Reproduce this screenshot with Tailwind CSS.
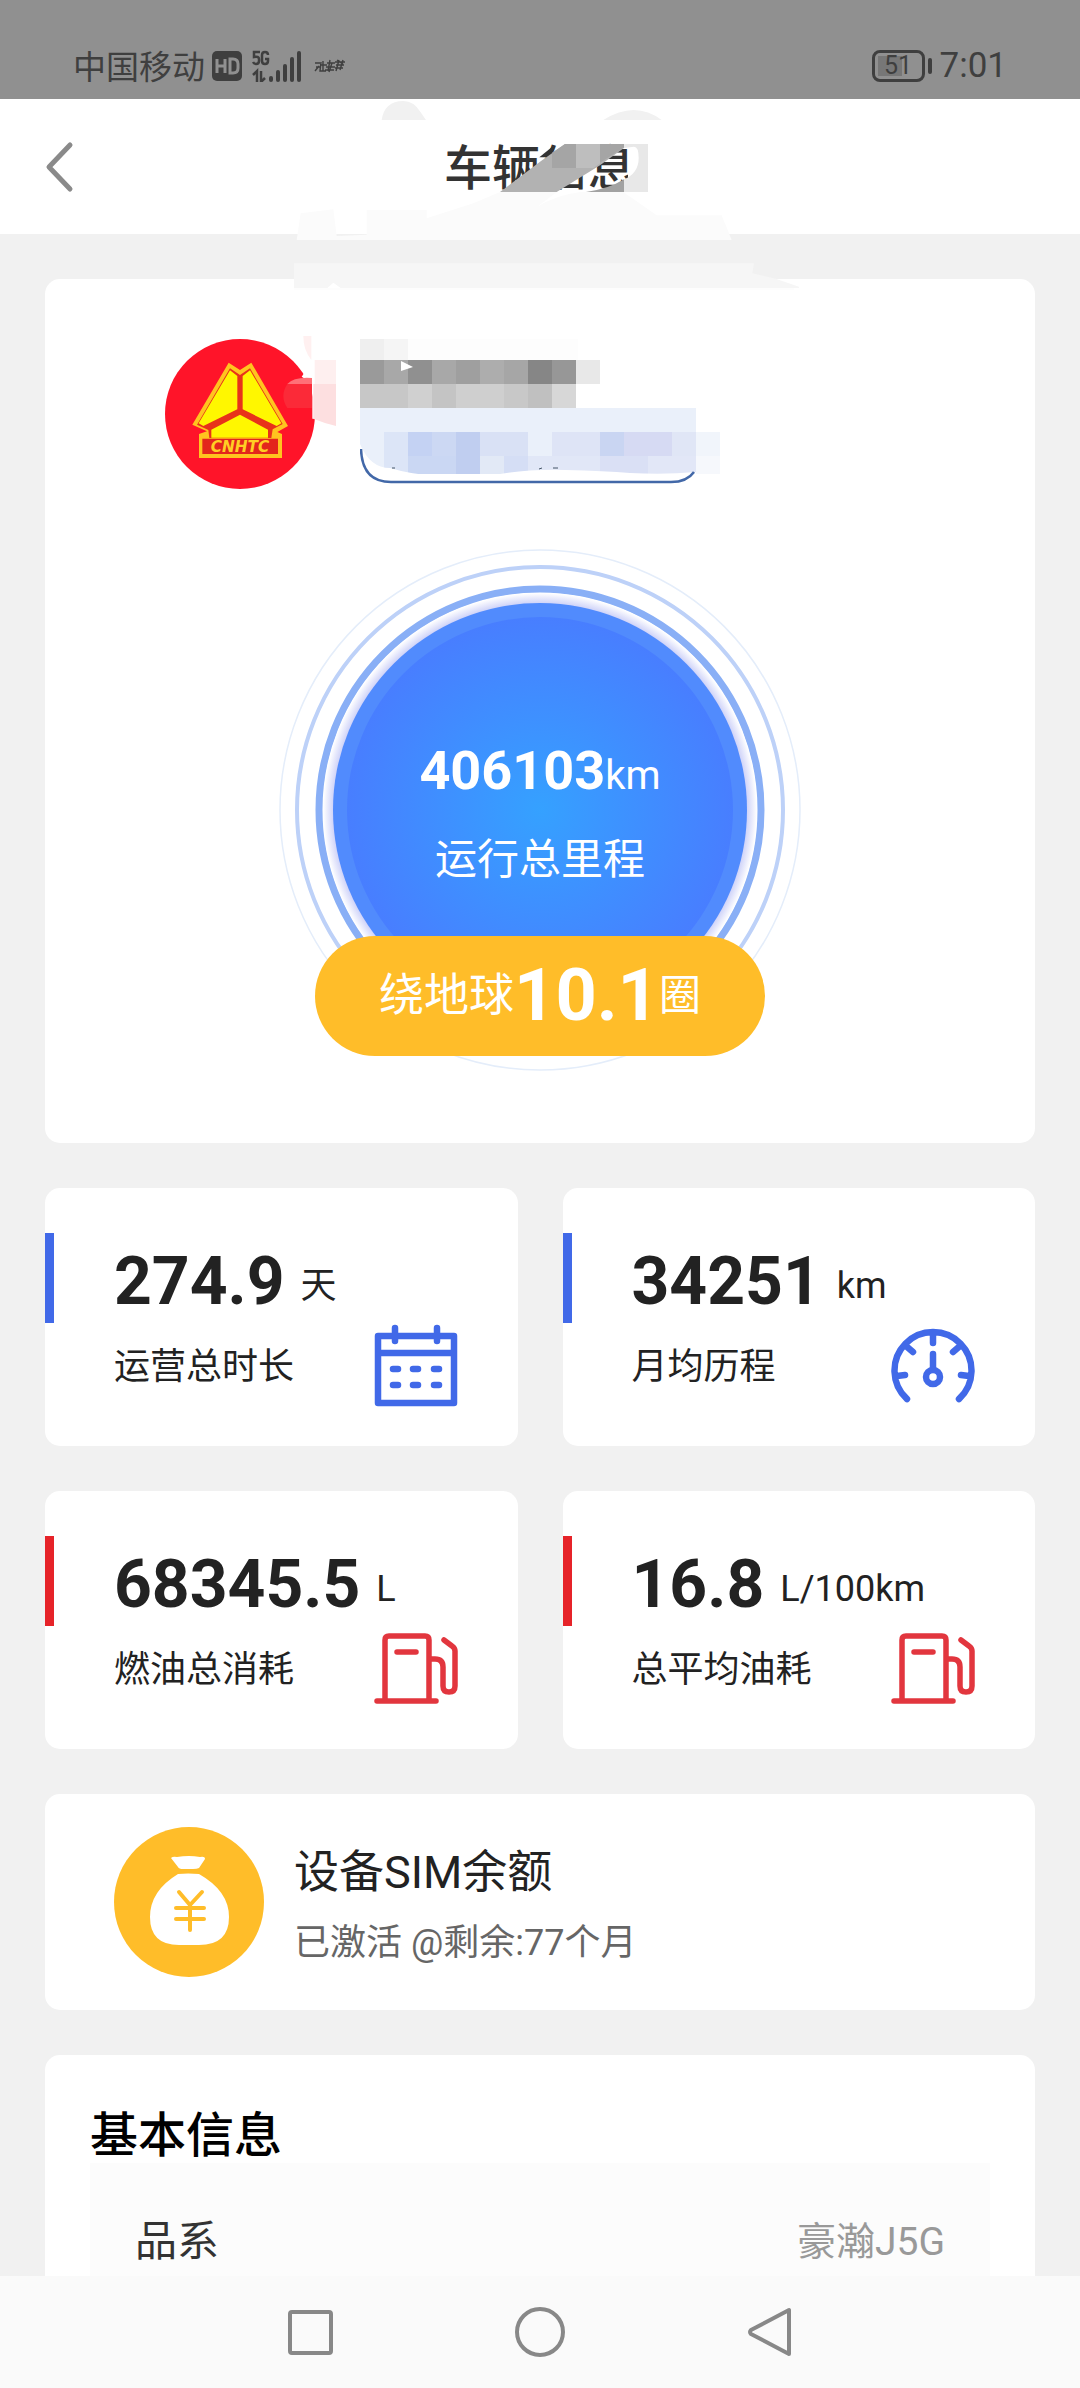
<!DOCTYPE html>
<html lang="zh-CN">
<head>
<meta charset="utf-8">
<meta name="viewport" content="width=device-width, initial-scale=1">
<title>车辆信息</title>
<script src="https://cdn.jsdelivr.net/npm/@tailwindcss/browser@4"></script>
</head>
<body class="flex h-screen flex-col overflow-hidden bg-[#f1f1f1] font-['Roboto','Noto_Sans_CJK_SC',sans-serif] text-[#222]">

<!-- System status bar -->
<div class="flex h-[99px] shrink-0 items-end justify-between bg-[#909090] px-[73px] pb-[15px] text-[#3f3f3f]">
  <div class="flex h-9 items-center">
    <span class="pt-1 text-[33px] leading-9">中国移动</span>
    <svg class="ml-[7px] h-[30px] w-[30px]" viewBox="0 0 30 30" aria-label="HD"><rect width="30" height="30" rx="5" fill="#3f3f3f"/><path d="M5 8v14M13 8v14M5 15h8M18 8v14h3q5 0 5-5v-4q0-5-5-5z" fill="none" stroke="#909090" stroke-width="3"/></svg>
    <svg class="ml-[10px] h-8 w-[52px]" viewBox="0 0 52 32" aria-label="5G" fill="#3f3f3f">
      <path d="M8 2H2v5q5-1 5 2v2q0 3-3 3-2 0-3-2M16 5q0-3-3-3t-3 3v6q0 3 3 3t3-3V9h-3" fill="none" stroke="#3f3f3f" stroke-width="2.500"/>
      <path d="M1 25l4-4v11M9 21v11l4-4" fill="none" stroke="#3f3f3f" stroke-width="2.500"/>
      <rect x="17" y="26" width="4" height="6" rx="2"/><rect x="24" y="20" width="4" height="12" rx="2"/><rect x="31" y="14" width="4" height="18" rx="2"/><rect x="38" y="7" width="4" height="25" rx="2"/><rect x="45" y="1" width="4" height="31" rx="2"/>
    </svg>
    <svg class="ml-[10px] h-4 w-8" viewBox="0 0 32 16" fill="none" stroke="#3f3f3f" stroke-width="1.4" aria-hidden="true"><path d="M1 5h5M2 9h5M1 13l4-5M7 4l-1 9h6M7 7h6M9 3v10M13 5h8M12 9h9M11 12h9M16 2l-2 11M18 5l-3 9M21 4h10M22 7h8M21 10h8M25 2l-3 11M29 2l-3 10M23 2l6 4"/></svg>
  </div>
  <div class="flex h-9 items-center">
    <span class="relative flex h-8 w-[53px] items-center rounded-lg border-[3px] border-[#3f3f3f] pl-[3px]">
      <span class="h-5 w-6 bg-[#777]"></span>
      <span class="absolute inset-0 text-center text-[25px] leading-[26px]">51</span>
    </span>
    <span class="ml-[3px] h-4 w-1 rounded bg-[#3f3f3f]"></span>
    <time class="ml-[8px] text-[35px] leading-9">7:01</time>
  </div>
</div>

<!-- Title bar -->
<header class="relative z-10 flex h-[135px] shrink-0 items-center justify-center bg-white">
  <button class="absolute left-[42px] flex h-[60px] w-10 items-center" aria-label="返回">
    <svg class="h-[52px] w-9" viewBox="0 0 36 52" fill="none" stroke="#8a8a8a" stroke-width="5" stroke-linecap="round" stroke-linejoin="round"><path d="M28 4L7 26l21 22"/></svg>
  </button>
  <h1 class="pt-1 text-[48px] font-medium leading-[68px] text-[#333]">车辆信息</h1>
  <!-- Privacy smudges over the title -->
  <svg class="pointer-events-none absolute -top-[9px] left-1/2 -ml-[260px] h-[200px] w-[520px]" viewBox="0 0 1560 600" aria-hidden="true">
    <path d="M305 90q8-56 65-57 32 0 52 34l16 23zM970 90q95-60 175 0z" fill="#f1f1f1"/>
    <path d="M50 450l12-80 98-12 10 80 90-4v-74h180v25l140-45 80-34h370l100 70h195l30 74z" fill="#fbfbfb"/>
    <path d="M815 172h8l-15 30h-30z" fill="#333"/>
    <path d="M660 306L780 215l75-53h180v10L960 226 830 306z" fill="#b2b2b2"/>
    <path d="M816 188l39-26h33v72h-72zM960 162h72v10l-72 46z" fill="#a5a5a5"/>
    <path d="M888 162h72v58l-20 14h-52z" fill="#bebebe"/>
    <path d="M918 306q70-10 114-38v38z" fill="#a2a2a2"/>
    <path d="M1044 172h20q14 6 12 34 0 44-32 64z" fill="#fff"/>
    <path d="M1032 162h72v144h-72v-38q44-18 44-64 0-34-14-34l-30 4z" fill="#e8e8e8"/>
    <path d="M770 352l60-46h72q-80 10-132 46z" fill="#fff"/>
    <path d="M42 520h1380l-5 30 70 16 70 24v4H182l-22-16-18 16H42z" fill="#f6f6f6"/>
    <path d="M42 594h1500v18H42z" fill="#fdfdfd"/>
  </svg>
</header>

<main class="flex min-h-0 flex-1 flex-col gap-[45px] overflow-hidden px-[45px] pt-[45px]">

  <!-- Vehicle summary -->
  <section class="shrink-0 rounded-[15px] bg-white pb-[72px] pt-[60px]">
    <div class="flex items-start gap-[45px] pl-[120px]">
      <svg class="h-[150px] w-[150px] shrink-0 overflow-visible" viewBox="45 57 450 450" role="img" aria-label="CNHTC">
        <circle cx="270" cy="282" r="225" fill="#ff1429"/>
        <path d="M236 128l34 22 34-22 110 190-32 18 14 6v72H147v-72l24-8-44-20z" fill="#ffc41f"/>
        <path d="M240 145l30 20 30-20 98 167-30 16-4 26H178l-3-24-34-16z" fill="#e8321a"/>
        <path d="M240 151l22 17v100l-102 50-14-8zM300 151l-22 17v100l102 50 14-8zM270 284l84 45v24H184v-24z" fill="#fff700"/>
        <path d="M157 356h227v46H157z" fill="#e3261c"/>
        <text x="270" y="395" text-anchor="middle" font-family="DejaVu Sans" font-weight="bold" font-style="italic" font-size="46" fill="#ffcf24">CNHTC</text>
        <path d="M486 125l-31 45 12 8 20-8v126h8l10 10h53V120z" fill="#fff"/>
        <path d="M494 120h64v72h-64z" fill="#feefef"/>
        <path d="M490 192h68v126q-34-8-68-22z" fill="#fddfe0"/>
        <path d="M412 192q20-22 74-18v18z" fill="#ff7077"/>
        <path d="M412 192h74v72h-74q-24-36 0-72z" fill="#fb2a38"/>
        <path d="M460 48h24v72q-24-30-24-72z" fill="#fff0f0"/>
      </svg>
      <!-- Redacted plate and tag -->
      <svg class="h-[150px] w-[360px]" viewBox="360 339 360 150" aria-hidden="true" shape-rendering="crispEdges">
        <path d="M360 339h24v21h-24z" fill="#efefef"/><path d="M384 339h24v21h-24z" fill="#f5f5f5"/>
        <path d="M408 339h170v21H408z" fill="#fdfdfd"/>
        <path d="M360 360h24v24h-24z" fill="#9a9a9a"/><path d="M384 360h24v24h-24z" fill="#a8a8a8"/><path d="M408 360h24v24h-24z" fill="#909090"/><path d="M432 360h24v24h-24z" fill="#a8a8a8"/><path d="M456 360h24v24h-24z" fill="#9f9f9f"/><path d="M480 360h24v24h-24z" fill="#adadad"/><path d="M504 360h24v24h-24z" fill="#a6a6a6"/><path d="M528 360h24v24h-24z" fill="#868686"/><path d="M552 360h24v24h-24z" fill="#979797"/><path d="M576 360h24v24h-24z" fill="#e8e8e8"/>
        <path d="M360 384h48v24h-48z" fill="#c7c7c7"/><path d="M408 384h24v24h-24z" fill="#d0d0d0"/><path d="M432 384h24v24h-24z" fill="#c4c4c4"/><path d="M456 384h48v24h-48z" fill="#cfcfcf"/><path d="M504 384h24v24h-24z" fill="#c8c8c8"/><path d="M528 384h24v24h-24z" fill="#c0c0c0"/><path d="M552 384h24v24h-24z" fill="#d7d7d7"/>
        <path d="M360 408h336v66H360z" fill="#eaf0fa"/>
        <path d="M384 432h24v42h-24z" fill="#dce5f7"/><path d="M408 432h24v24h-24z" fill="#c4d2f3"/><path d="M432 432h24v24h-24z" fill="#ccd8f3"/><path d="M456 432h24v42h-24z" fill="#c0cef0"/><path d="M480 432h48v24h-48z" fill="#d9e1f5"/><path d="M552 432h48v24h-48z" fill="#dee4f6"/><path d="M600 432h24v24h-24z" fill="#c9d5f2"/><path d="M624 432h48v24h-48z" fill="#d6daf3"/><path d="M672 432h24v24h-24z" fill="#e0e6f6"/><path d="M696 432h24v24h-24z" fill="#f1f5fb"/>
        <path d="M408 456h48v18h-48z" fill="#cad7f3"/><path d="M480 456h24v18h-24z" fill="#e2e9f6"/><path d="M504 456h24v18h-24z" fill="#d5def5"/><path d="M528 456h72v18h-72z" fill="#e1e7f7"/><path d="M600 456h48v18h-48z" fill="#dae0f5"/><path d="M648 456h48v18h-48z" fill="#e2e7f7"/><path d="M696 456h24v18h-24z" fill="#f6f8fc"/>
        <g shape-rendering="auto">
          <path d="M360 444q10 24 30 24 20 6 40 7 40 1 70-1 30-5 65-4 40 1 65 3 35 2 66-1v17H360z" fill="#fff"/>
          <path d="M361 449q1 33 30 33h280q16 0 23-10" fill="none" stroke="#4268a8" stroke-width="2.5"/>
          <path d="M401 361l12 6-12 4z" fill="#fff"/>
          <path d="M392 468h3M539 469l3-1M553 468h5" stroke="#456" stroke-width="1"/>
        </g>
      </svg>
    </div>

    <!-- Total mileage dial -->
    <div class="mt-[60px] grid justify-center">
      <svg class="col-start-1 row-start-1 h-[522px] w-[522px]" viewBox="0 0 522 522" aria-hidden="true">
        <defs>
          <radialGradient id="disc"><stop offset="0" stop-color="#35a1ff"/><stop offset="1" stop-color="#487eff"/></radialGradient>
          <radialGradient id="glow"><stop offset=".95" stop-color="#ccd0f8"/><stop offset="1" stop-color="#fff"/></radialGradient>
        </defs>
        <circle cx="261" cy="261" r="260" fill="none" stroke="#e4edfa" stroke-width="1.5"/>
        <circle cx="261" cy="261" r="243" fill="none" stroke="#bdd1f8" stroke-width="4"/>
        <circle cx="261" cy="261" r="221" fill="none" stroke="#89aff6" stroke-width="7"/>
        <circle cx="261" cy="261" r="217" fill="url(#glow)"/>
        <circle cx="261" cy="261" r="207" fill="#518bfd"/>
        <circle cx="261" cy="261" r="193" fill="url(#disc)"/>
      </svg>
      <div class="col-start-1 row-start-1 flex flex-col items-center pt-[190px] text-white">
        <p class="text-[40px] leading-[64px]"><strong class="text-[54px] font-bold">406103</strong>km</p>
        <p class="mt-[22px] text-[42px] leading-[60px]">运行总里程</p>
        <p class="mt-[46px] flex h-[120px] w-[450px] items-center justify-center rounded-full bg-[#ffbd29] text-[45px] leading-[72px]">绕地球<strong class="text-[72px] font-bold">10.1</strong><span class="text-[42px]">圈</span></p>
      </div>
    </div>
  </section>

  <!-- Statistics -->
  <section class="grid shrink-0 grid-cols-2 gap-[45px]">
    <article class="rounded-[15px] bg-white pb-[39px] pt-[45px]">
      <p class="flex h-[90px] items-end gap-4 border-l-[9px] border-[#4169e8] pl-[60px]"><strong class="text-[66px] font-bold leading-[82px]">274.9</strong><span class="text-[36px] leading-[74px]">天</span></p>
      <div class="flex h-[84px] items-center justify-between pl-[69px] pr-[60px]">
        <h2 class="pt-1 text-[36px] leading-[54px]">运营总时长</h2>
        <svg class="h-[84px] w-[84px]" viewBox="0 0 84 84" fill="none" stroke="#4169e8" stroke-width="6.5" stroke-linecap="round" stroke-linejoin="round" aria-hidden="true"><path d="M4 13h76v67H4zM4 30h76M21 5v13M63 5v13M19 46h5M39 46h5M60 46h5M19 62h5M39 62h5M60 62h5"/></svg>
      </div>
    </article>
    <article class="rounded-[15px] bg-white pb-[39px] pt-[45px]">
      <p class="flex h-[90px] items-end gap-4 border-l-[9px] border-[#4169e8] pl-[60px]"><strong class="text-[66px] font-bold leading-[82px]">34251</strong><span class="text-[36px] leading-[74px]">km</span></p>
      <div class="flex h-[84px] items-center justify-between pl-[69px] pr-[60px]">
        <h2 class="pt-1 text-[36px] leading-[54px]">月均历程</h2>
        <svg class="h-[84px] w-[84px]" viewBox="0 0 84 84" fill="none" stroke="#4169e8" stroke-width="6.5" stroke-linecap="round" aria-hidden="true"><path d="M16 76A38.500 38.500 0 1 1 68 76M42 10v10M15 23l7 6M69 23l-7 6M6 53l8-1M78 53l-8-1M42 31v15"/><circle cx="42" cy="54" r="7"/></svg>
      </div>
    </article>
    <article class="rounded-[15px] bg-white pb-[39px] pt-[45px]">
      <p class="flex h-[90px] items-end gap-4 border-l-[9px] border-[#e62329] pl-[60px]"><strong class="text-[66px] font-bold leading-[82px]">68345.5</strong><span class="text-[36px] leading-[74px]">L</span></p>
      <div class="flex h-[84px] items-center justify-between pl-[69px] pr-[60px]">
        <h2 class="pt-1 text-[36px] leading-[54px]">燃油总消耗</h2>
        <svg class="h-[84px] w-[84px]" viewBox="0 0 84 84" fill="none" stroke="#e2363e" stroke-width="5.5" stroke-linecap="round" stroke-linejoin="round" aria-hidden="true"><path d="M3 75h59M11 75V14q0-4 4-4h36q4 0 4 4v61M23 26h19M55 33h6q8 0 8 8v19q0 6 6 6t6-6V25q0-3-3-5l-8-6"/></svg>
      </div>
    </article>
    <article class="rounded-[15px] bg-white pb-[39px] pt-[45px]">
      <p class="flex h-[90px] items-end gap-4 border-l-[9px] border-[#e62329] pl-[60px]"><strong class="text-[66px] font-bold leading-[82px]">16.8</strong><span class="text-[36px] leading-[74px]">L/100km</span></p>
      <div class="flex h-[84px] items-center justify-between pl-[69px] pr-[60px]">
        <h2 class="pt-1 text-[36px] leading-[54px]">总平均油耗</h2>
        <svg class="h-[84px] w-[84px]" viewBox="0 0 84 84" fill="none" stroke="#e2363e" stroke-width="5.5" stroke-linecap="round" stroke-linejoin="round" aria-hidden="true"><path d="M3 75h59M11 75V14q0-4 4-4h36q4 0 4 4v61M23 26h19M55 33h6q8 0 8 8v19q0 6 6 6t6-6V25q0-3-3-5l-8-6"/></svg>
      </div>
    </article>
  </section>

  <!-- SIM balance -->
  <section class="flex shrink-0 items-center gap-[30px] rounded-[15px] bg-white py-[33px] pl-[69px]">
    <svg class="h-[150px] w-[150px]" viewBox="0 0 150 150" aria-hidden="true">
      <circle cx="75" cy="75" r="75" fill="#ffbd29"/>
      <path d="M57 31q2-2 6-1 12-2 23 0 5-1 5 2l-6 9q-2 1-6 1H69q-4 0-5-2zM64 47q10-1 21 0 30 17 30 43 0 28-30 28H65q-29 0-29-28 0-26 28-43z" fill="#fff"/>
      <path d="M65 65l11 13 12-13M76 78v25M62 81h28M62 92h28" fill="none" stroke="#ffbd29" stroke-width="4" stroke-linecap="round" stroke-linejoin="round"/>
    </svg>
    <div class="pt-2">
      <h2 class="text-[45px] leading-[60px]">设备SIM余额</h2>
      <p class="mt-[13px] text-[36px] leading-[54px] text-[#666]">已激活 @剩余:77个月</p>
    </div>
  </section>

  <!-- Basic information -->
  <section class="shrink-0 rounded-t-[15px] bg-white px-[45px] pt-[53px]">
    <h2 class="text-[48px] font-medium leading-[55px] text-black">基本信息</h2>
    <dl class="flex items-center justify-between bg-[#fcfcfc] px-[45px] pb-3 pt-[51px]">
      <dt class="text-[42px] leading-[56px] text-[#333]">品系</dt>
      <dd class="text-[39px] leading-[56px] text-[#999]">豪瀚J5G</dd>
    </dl>
  </section>
</main>

<!-- System navigation -->
<nav class="flex h-[112px] shrink-0 items-center justify-center gap-[180px] bg-[#fafafa]">
  <button class="h-[50px] w-[50px]" aria-label="最近任务"><svg viewBox="0 0 50 50" fill="none" stroke="#888" stroke-width="4"><rect x="5" y="5" width="41" height="41" rx="2"/></svg></button>
  <button class="h-[50px] w-[50px]" aria-label="主屏幕"><svg viewBox="0 0 50 50" fill="none" stroke="#888" stroke-width="4"><circle cx="25" cy="25" r="23"/></svg></button>
  <button class="h-[50px] w-[50px]" aria-label="返回上一页"><svg viewBox="0 0 50 50" fill="none" stroke="#888" stroke-width="4" stroke-linejoin="round"><path d="M44 3v44L6 27q-2-2 0-4z"/></svg></button>
</nav>
</body>
</html>
